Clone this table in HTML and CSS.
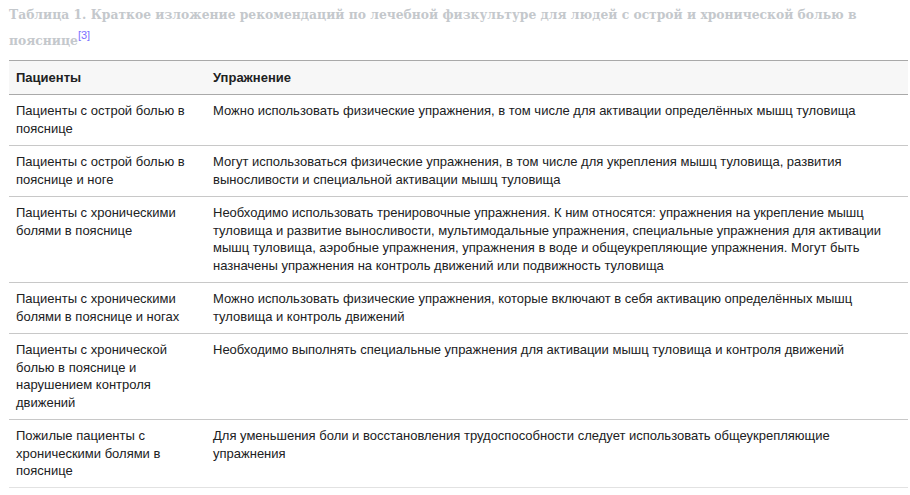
FILE: index.html
```html
<!DOCTYPE html>
<html lang="ru">
<head>
<meta charset="utf-8">
<title>Таблица 1</title>
<link rel="stylesheet" href="styles.css">
</head>
<body>
<div class="wrap">
  <table class="rec">
    <caption>Таблица 1. Краткое изложение рекомендаций по лечебной физкультуре для людей с острой и хронической болью в пояснице<sup class="ref">[3]</sup></caption>
    <thead>
      <tr><th class="c1">Пациенты</th><th>Упражнение</th></tr>
    </thead>
    <tbody>
      <tr><td class="c1">Пациенты с острой болью в пояснице</td><td>Можно использовать физические упражнения, в том числе для активации определённых мышц туловища</td></tr>
      <tr><td class="c1">Пациенты с острой болью в пояснице и ноге</td><td>Могут использоваться физические упражнения, в том числе для укрепления мышц туловища, развития выносливости и специальной активации мышц туловища</td></tr>
      <tr><td class="c1">Пациенты с хроническими болями в пояснице</td><td>Необходимо использовать тренировочные упражнения. К ним относятся: упражнения на укрепление мышц туловища и развитие выносливости, мультимодальные упражнения, специальные упражнения для активации мышц туловища, аэробные упражнения, упражнения в воде и общеукрепляющие упражнения. Могут быть назначены упражнения на контроль движений или подвижность туловища</td></tr>
      <tr><td class="c1">Пациенты с хроническими болями в пояснице и ногах</td><td>Можно использовать физические упражнения, которые включают в себя активацию определённых мышц туловища и контроль движений</td></tr>
      <tr><td class="c1">Пациенты с хронической болью в пояснице и нарушением контроля движений</td><td>Необходимо выполнять специальные упражнения для активации мышц туловища и контроля движений</td></tr>
      <tr class="last"><td class="c1">Пожилые пациенты с хроническими болями в пояснице</td><td>Для уменьшения боли и восстановления трудоспособности следует использовать общеукрепляющие упражнения</td></tr>
    </tbody>
  </table>
</div>
</body>
</html>
```

FILE: styles.css
```css
html, body {
  margin: 0;
  padding: 0;
  background: #ffffff;
}

.wrap {
  padding-left: 9px;
  width: 899px;
}

.rec {
  width: 899px;
  border-collapse: collapse;
  font-family: "Liberation Sans", Arial, sans-serif;
  font-size: 13px;
  color: #202122;
  table-layout: fixed;
}

.rec caption {
  caption-side: top;
  text-align: left;
  font-family: "DejaVu Serif Condensed", "DejaVu Serif", "Liberation Serif", serif;
  font-stretch: condensed;
  font-weight: bold;
  font-size: 13.7px;
  line-height: 26px;
  color: #c4c8cc;
  padding-bottom: 7px;
  padding-top: 1px;
}

.ref {
  font-family: "Liberation Sans", Arial, sans-serif;
  font-stretch: normal;
  font-weight: normal;
  font-size: 11px;
  line-height: 0;
  color: #7a70ff;
}

.rec th, .rec td {
  text-align: left;
  vertical-align: top;
  padding: 7.5px 8px 7.5px 7px;
  line-height: 17.5px;
}

.rec th.c1, .rec td.c1 {
  width: 182px;
}

.rec thead tr {
  background: #f7f7f7;
  border-top: 1px solid #a9a9a9;
  border-bottom: 1px solid #a9a9a9;
}

.rec th {
  font-weight: bold;
}

.rec tbody tr {
  border-bottom: 1px solid #c8c8c8;
}

.rec tbody tr.last {
  border-bottom: 1px solid #e2e2e2;
}
```
